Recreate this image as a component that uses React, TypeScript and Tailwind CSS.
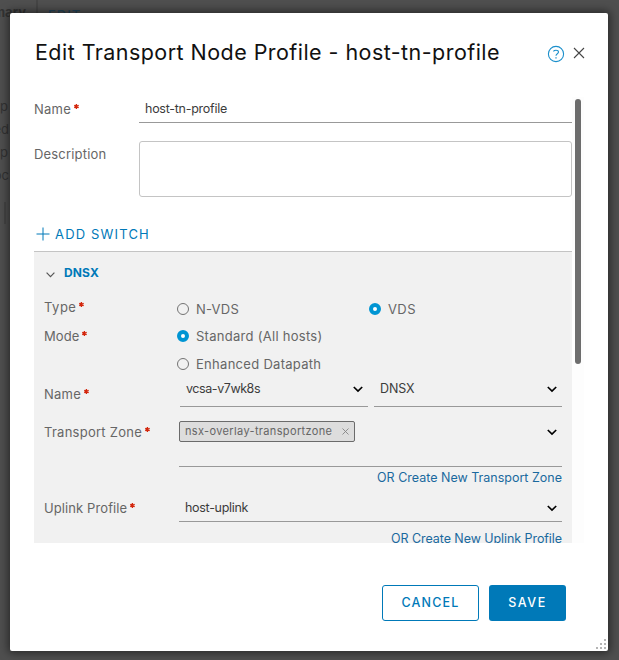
import React from "react";

function Required() {
  return (
    <svg className="mb-[5px] ml-[2.5px] shrink-0" width="5" height="5" viewBox="0 0 5 5" aria-label="required">
      <path d="M2.4 0V5M0.2 1.3L4.7 3.6M4.7 1.3L0.2 3.6" stroke="#d3260c" strokeWidth="1.4" fill="none" />
    </svg>
  );
}

function Label({ children, required, tracking = "" }: { children: React.ReactNode; required?: boolean; tracking?: string }) {
  return (
    <div className="flex h-4 items-center text-[13px] leading-4 whitespace-nowrap text-[#666]">
      <span className={tracking}>{children}</span>
      {required && <Required />}
    </div>
  );
}

function Radio({ label, checked, tracking = "" }: { label: string; checked?: boolean; tracking?: string }) {
  return (
    <div className="flex h-4 items-center gap-[7px] text-[13px] leading-4 whitespace-nowrap text-[#666]">
      {checked ? (
        <span className="size-3 rounded-full border-4 border-[#0095d3] bg-white" />
      ) : (
        <span className="size-3 rounded-full border border-[#737373]" />
      )}
      <span className={tracking}>{label}</span>
    </div>
  );
}

function Caret() {
  return (
    <svg width="10" height="7" viewBox="0 0 10 7" fill="none" className="shrink-0">
      <path d="M0.8 1L5 5L9.2 1" stroke="#000" strokeWidth="1.7" />
    </svg>
  );
}

function Select({ value, className = "", tracking = "" }: { value: string; className?: string; tracking?: string }) {
  return (
    <div className={`flex items-start justify-between border-b border-[#999] pr-[5px] pl-[6px] text-[12.5px] leading-4 text-[#3c3c3c] ${className}`}>
      <span className={tracking}>{value}</span>
      <span className="flex h-4 items-center">
        <Caret />
      </span>
    </div>
  );
}

export default function App() {
  return (
    <div className="relative h-[660px] w-[619px] overflow-hidden bg-[#4f4f4f] pt-[13px] pl-[10px] font-['Inter','Liberation_Sans',sans-serif]">
      <div className="absolute inset-0 text-[13px] leading-4 text-[#333]">
        <span className="absolute top-[4px] right-[593px] font-bold">Summary</span>
        <span className="absolute top-0 left-[36px] h-7 w-[2px] bg-[#454545]" />
        <span className="absolute top-[7px] left-[48px] font-medium tracking-[1px] text-[#24445a]">EDIT</span>
        <span className="absolute top-[98px] right-[611px]">p</span>
        <span className="absolute top-[121px] right-[610px]">ed</span>
        <span className="absolute top-[144px] right-[611px]">p</span>
        <span className="absolute top-[167px] right-[610px]">oc</span>
        <span className="absolute top-[202px] left-[4px] h-[22px] w-[2px] bg-[#444]" />
      </div>

      <div className="relative flex h-[638px] w-[598px] flex-col rounded-[2px] bg-white px-6 shadow-[0_0_8px_2px_rgba(0,0,0,0.5)]">
        <header className="-mr-1 flex h-[84px] items-start pt-[24px] pl-[1px]">
          <h1 className="w-[512px] shrink-0 text-[21.5px] leading-[30px] tracking-[0.45px] whitespace-nowrap text-[#111]">
            Edit Transport Node Profile - host-tn-profile
          </h1>
          <svg width="18" height="18" viewBox="0 0 18 18" fill="none" className="mt-[8px] shrink-0" stroke="#1b8fcb">
            <circle cx="9" cy="9" r="7.6" strokeWidth="1.1" />
            <path d="M6.4 6.4C7 5.6 8 5.2 9 5.2C10.4 5.2 11.5 5.9 11.5 7.1C11.5 8.7 9 8.8 9 10.8" strokeWidth="1.1" />
            <path d="M9 12.2V13.5" strokeWidth="1.3" />
          </svg>
          <svg width="12" height="12" viewBox="0 0 12 12" fill="none" className="mt-[10px] ml-[8px] shrink-0">
            <path d="M1 1L11 11M11 1L1 11" stroke="#454545" strokeWidth="1.1" />
          </svg>
        </header>

        <div className="flex h-[446px] overflow-hidden">
          <div className="w-[538px] shrink-0">
            <div className="flex h-[26px]">
              <div className="w-[105px] pt-[4px]">
                <Label required tracking="tracking-[0.25px]">Name</Label>
              </div>
              <div className="flex-1 border-b border-[#999] pt-[4px] pl-[6px] text-[12.5px] leading-4 text-[#3c3c3c]">
                <span className="tracking-[-0.26px]">host-tn-profile</span>
              </div>
            </div>

            <div className="mt-[18px] flex h-14">
              <div className="w-[105px] pt-[5px]">
                <Label tracking="tracking-[0.18px]">Description</Label>
              </div>
              <div className="flex-1 rounded-[3px] border border-[#c4c4c4]" />
            </div>

            <div className="flex h-[54px] items-center pt-[21px] pl-[2px] text-[13px] text-[#0079b8]">
              <svg width="14" height="14" viewBox="0 0 14 14" fill="none" className="mb-[2px]">
                <path d="M7 0.5V13.5M0.5 7H13.5" stroke="currentColor" strokeWidth="1" />
              </svg>
              <span className="ml-[5px] tracking-[1.17px]">ADD SWITCH</span>
            </div>

            <section className="h-[300px] border-t border-[#c4c4c4] bg-[#f1f1f1] pr-[10px] pl-[10px]">
              <div className="flex h-[42px] items-center pl-[2px]">
                <svg width="9" height="6" viewBox="0 0 9 6" fill="none" className="mt-[3px]">
                  <path d="M0.6 0.7L4.5 4.6L8.4 0.7" stroke="#555" strokeWidth="1.2" />
                </svg>
                <span className="ml-[9px] text-[12px] font-bold tracking-[0.15px] text-[#0079b8]">DNSX</span>
              </div>

              <div className="flex h-[29px] pt-[5px]">
                <div className="w-[133px]">
                  <Label required tracking="tracking-[0.5px]">Type</Label>
                </div>
                <div className="flex pt-[2px]">
                  <div className="w-[192px]">
                    <Radio label="N-VDS" tracking="tracking-[0.25px]" />
                  </div>
                  <Radio label="VDS" checked tracking="tracking-[0.4px]" />
                </div>
              </div>

              <div className="flex h-[57px] pt-[5px]">
                <div className="w-[133px]">
                  <Label required tracking="tracking-[0.1px]">Mode</Label>
                </div>
                <div className="flex flex-col gap-[12px]">
                  <Radio label="Standard (All hosts)" checked tracking="tracking-[0.28px]" />
                  <Radio label="Enhanced Datapath" tracking="tracking-[0.29px]" />
                </div>
              </div>

              <div className="flex h-[27px]">
                <div className="w-[136px] pt-[6px]">
                  <Label required tracking="tracking-[0.25px]">Name</Label>
                </div>
                <Select value="vcsa-v7wk8s" tracking="tracking-[-0.43px]" className="w-[188px] pt-px" />
                <Select value="DNSX" tracking="tracking-[-0.1px]" className="ml-[6px] w-[188px] pt-px" />
              </div>

              <div className="mt-[14px] flex h-[46px]">
                <div className="w-[135px] pt-[3px]">
                  <Label required tracking="tracking-[0.26px]">Transport Zone</Label>
                </div>
                <div className="flex flex-1 items-start justify-between border-b border-[#999] pr-[5px]">
                  <span className="flex h-[21px] w-[176px] items-center justify-between rounded-[2px] border border-[#6b6b6b] bg-[#dddddd] pr-[5px] pb-px pl-[5px] text-[11px] leading-4 text-[#656565]">
                    <span className="tracking-[0.35px]">nsx-overlay-transportzone</span>
                    <svg width="7" height="7" viewBox="0 0 7 7" fill="none" className="mt-px">
                      <path d="M0.5 0.5L6.5 6.5M6.5 0.5L0.5 6.5" stroke="#858585" strokeWidth="0.9" />
                    </svg>
                  </span>
                  <span className="flex h-[22px] items-center">
                    <Caret />
                  </span>
                </div>
              </div>

              <div className="flex h-[23px] items-center justify-end pb-px text-[12.5px] leading-4 text-[#1a699e]">
                <span>OR Create New Transport Zone</span>
              </div>

              <div className="flex h-[32px]">
                <div className="w-[135px] pt-[10px]">
                  <Label required tracking="tracking-[0.1px]">Uplink Profile</Label>
                </div>
                <Select value="host-uplink" tracking="tracking-[-0.3px]" className="flex-1 pt-[10px]" />
              </div>

              <div className="flex justify-end pt-[9px] text-[12.5px] leading-4 text-[#1a699e]">
                <span className="tracking-[-0.07px]">OR Create New Uplink Profile</span>
              </div>
            </section>
          </div>
          <div className="w-[12px] shrink-0 bg-[#fdfdfd] pt-[2px] pl-[3px]">
            <div className="h-[265px] w-[6px] rounded-full bg-[#6d6d6d]" />
          </div>
        </div>

        <footer className="flex justify-end gap-[10px] pt-[42px] pr-[18px] text-[12.5px] font-medium">
          <button className="h-9 w-[97px] rounded-[3px] border border-[#0079b8] tracking-[1.2px] text-[#0079b8]">CANCEL</button>
          <button className="h-9 w-[77px] rounded-[3px] bg-[#0079b8] tracking-[1.5px] text-white">SAVE</button>
        </footer>

        <svg width="10" height="10" viewBox="0 0 10 10" fill="#b5b5b5" className="absolute right-[2px] bottom-[2px]">
          <path d="M8 0h2v2h-2zM4 4h2v2h-2zM8 4h2v2h-2zM0 8h2v2h-2zM4 8h2v2h-2zM8 8h2v2h-2z" />
        </svg>
      </div>
    </div>
  );
}
